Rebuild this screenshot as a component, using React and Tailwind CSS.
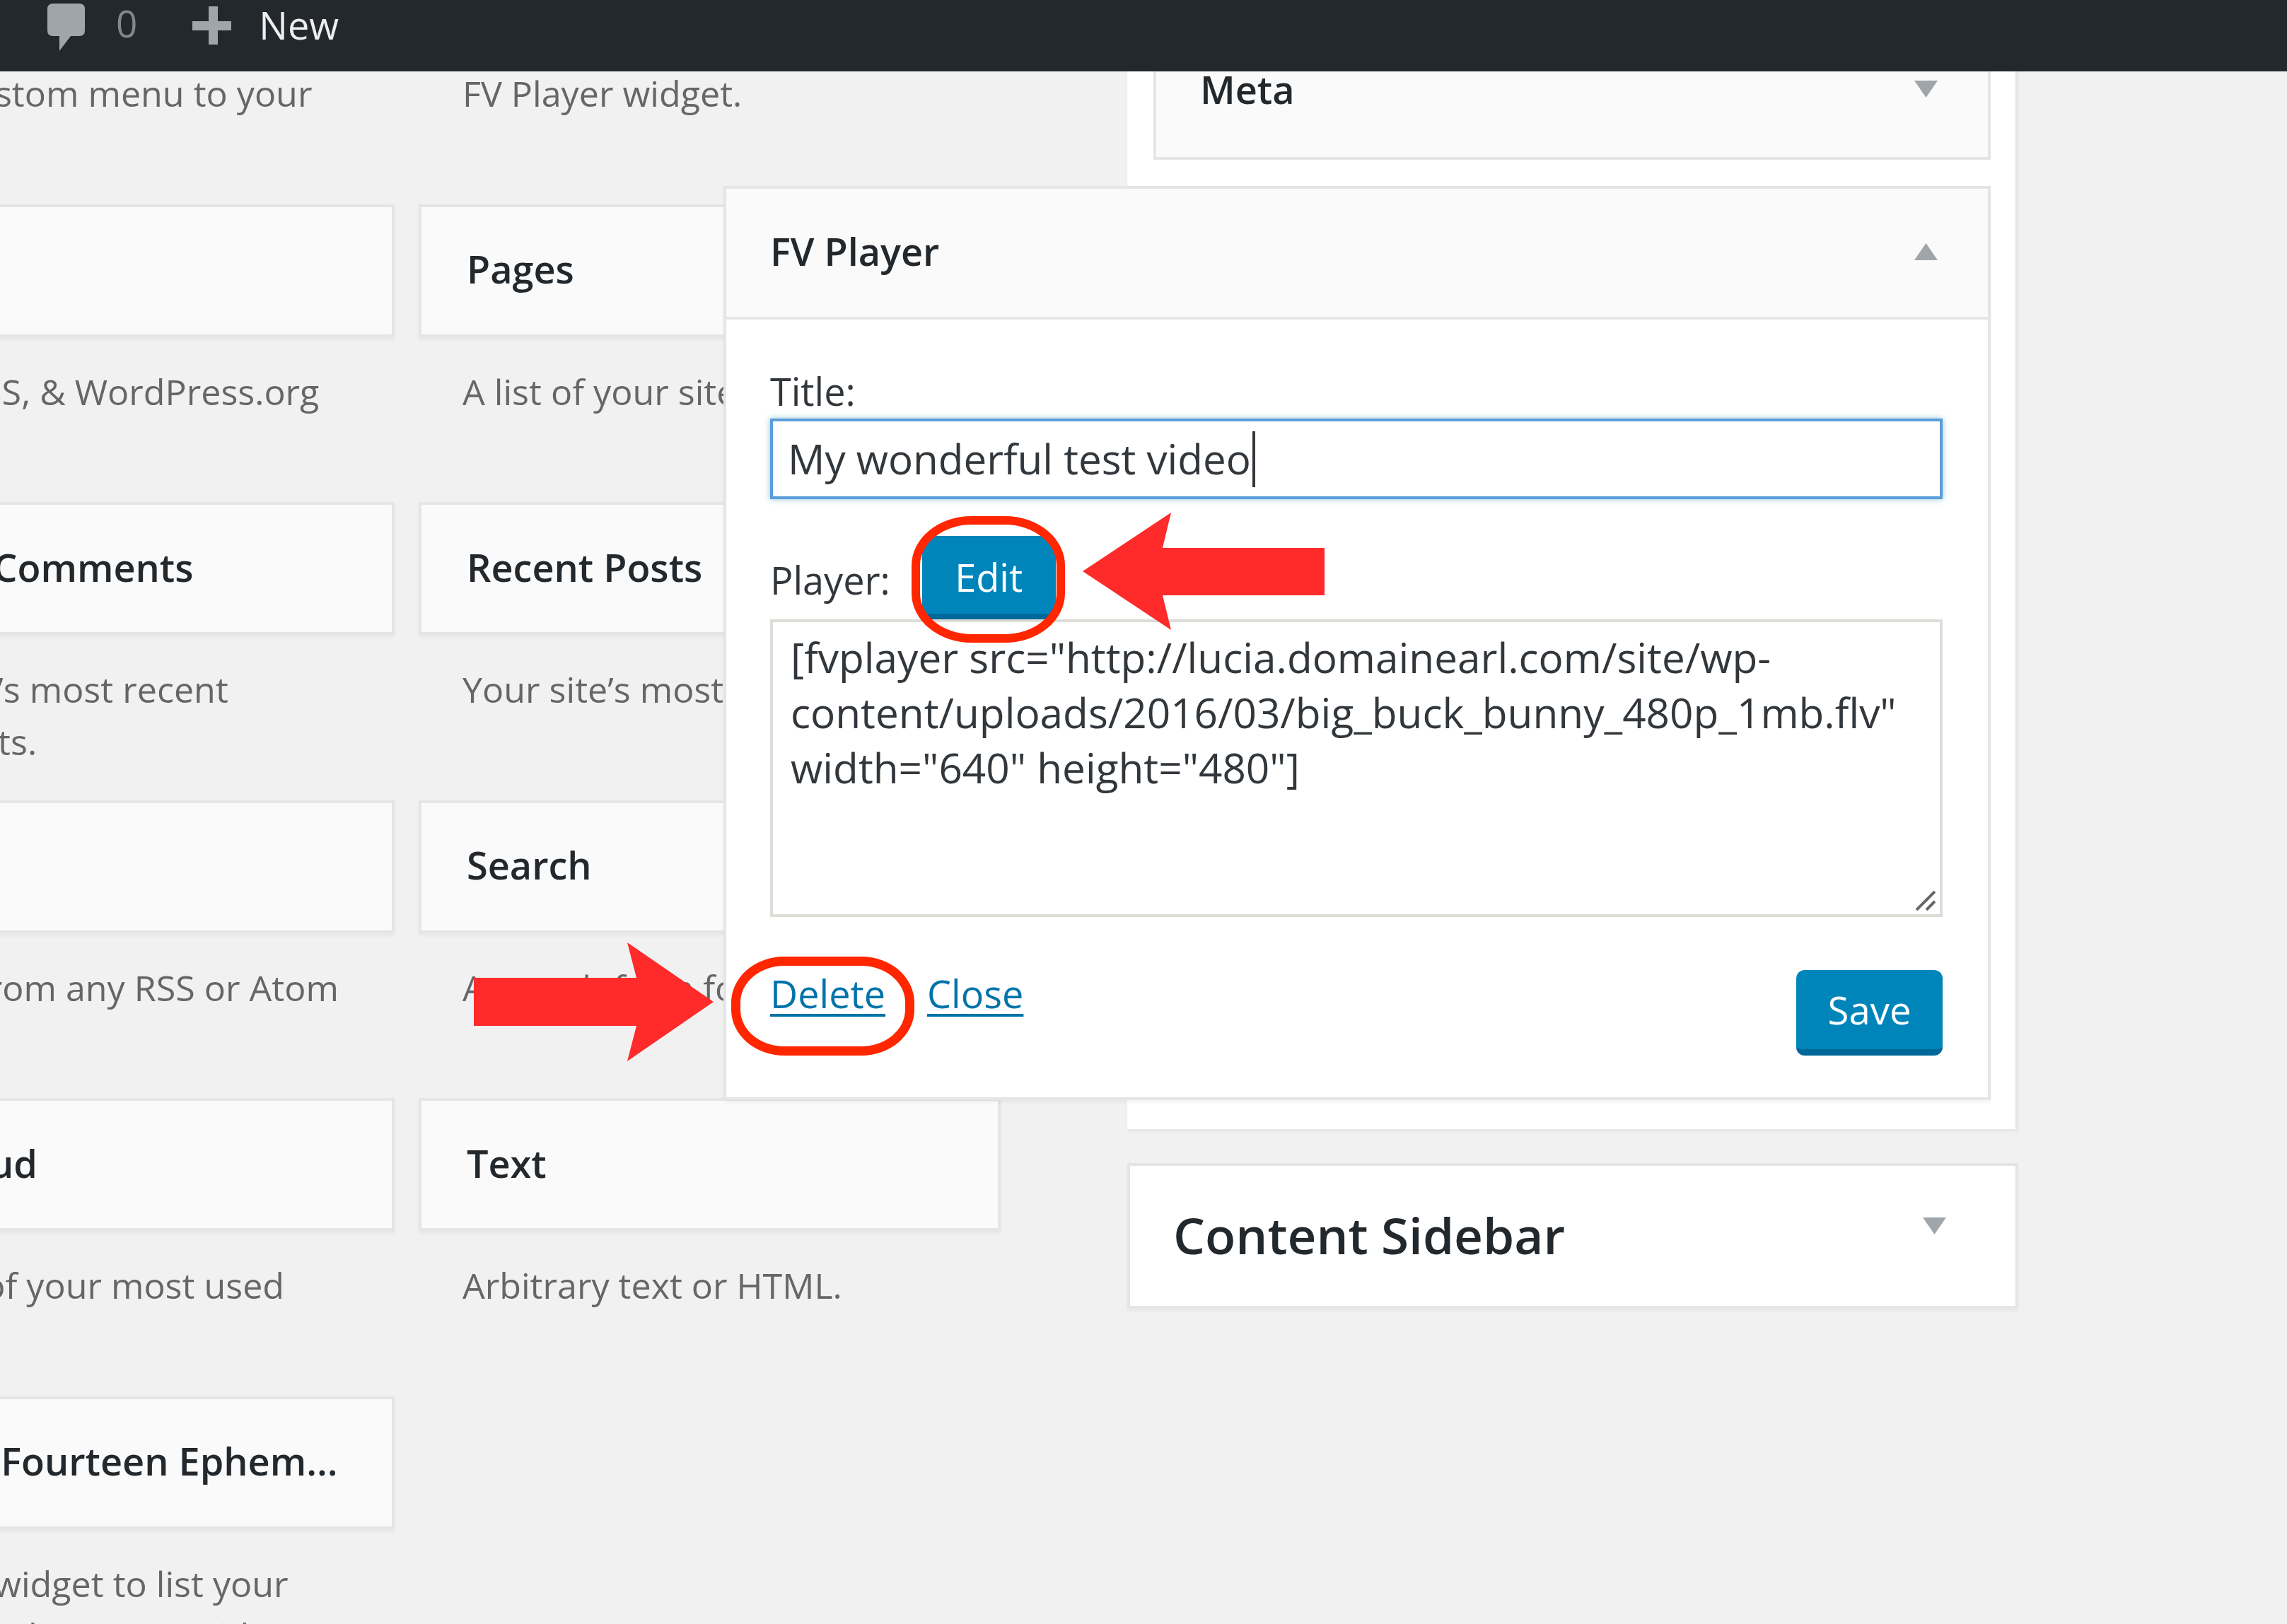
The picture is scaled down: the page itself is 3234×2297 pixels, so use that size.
import React from 'react';

const widgets = [
  ['', 'Add a custom menu to your sidebar.'],
  ['', 'FV Player widget.'],
  ['Meta', 'Login, RSS, & WordPress.org links.'],
  ['Pages', 'A list of your site’s Pages.'],
  ['Recent Comments', 'Your site’s most recent comments.'],
  ['Recent Posts', 'Your site’s most recent Posts.'],
  ['RSS', 'Entries from any RSS or Atom feed.'],
  ['Search', 'A search form for your site.'],
  ['Tag Cloud', 'A cloud of your most used tags.'],
  ['Text', 'Arbitrary text or HTML.'],
  ['Twenty Fourteen Ephem...', 'Use this widget to list your recent Aside, Quote, Video, Audio, Image, Gallery, and Link posts.'],
];

const Widget = ({ title, desc }) => (
  <div>
    <div className="h-[188px] flex items-center pl-[64px] pb-[4px] bg-[#fafafa] border-4 border-[#e5e5e5] shadow-[0_4px_4px_rgba(0,0,0,0.04)] text-[54px] font-semibold text-[#23282d] whitespace-nowrap">
      {title}
    </div>
    <p className="mt-[40px] px-[62px] text-[50.2px] leading-[74px] text-[#666]">{desc}</p>
  </div>
);

const Triangle = ({ up, className }) => (
  <svg viewBox="0 0 33 24" className={className}>
    <polygon points={up ? '16.5,0 33,24 0,24' : '0,0 33,0 16.5,24'} fill="#a0a5aa" />
  </svg>
);

export default function App() {
  return (
    <div className="relative w-[3234px] h-[2297px] overflow-hidden bg-[#f1f1f1] font-['Open_Sans',sans-serif]">
      {/* Admin bar */}
      <div className="relative z-30 h-[101px] bg-[#23282d] flex items-start">
        <svg viewBox="0 0 53 67" className="ml-[67px] mt-[5px] w-[53px] h-[67px]">
          <path d="M8 0H45Q53 0 53 8V38Q53 46 45 46H33L17 67V46H8Q0 46 0 38V8Q0 0 8 0Z" fill="#a0a5aa" />
        </svg>
        <span className="ml-[44px] mt-[-3px] text-[53px] leading-[72px] text-[#82878c]">0</span>
        <svg viewBox="0 0 55 54" className="ml-[78px] mt-[9px] w-[55px] h-[54px]">
          <path d="M23 0H36V21H55V34H36V54H23V34H0V21H23Z" fill="#a0a5aa" />
        </svg>
        <span className="ml-[39px] mt-[-1px] text-[54px] leading-[72px] text-[#eee]">New</span>
      </div>

      <div className="flex mt-[-234px] ml-[-271px]">
        {/* Available widgets */}
        <div className="w-[1686px] grid grid-cols-[829px_823px] gap-x-[34px] auto-rows-[421.5px] shrink-0">
          {widgets.map(([title, desc], i) => (
            <Widget key={i} title={title} desc={desc} />
          ))}
        </div>

        {/* Sidebars */}
        <div className="ml-[179px] w-[1260px] shrink-0">
          <div className="bg-white border-r-4 border-[#e5e5e5] pl-[37px] pr-[35px] pb-[41px] shadow-[0_4px_4px_rgba(0,0,0,0.04)]">
            <div className="h-[359px] bg-[#fafafa] border-x-4 border-b-4 border-[#e5e5e5] flex items-end">
              <div className="w-full h-[188px] flex items-center justify-between pl-[62px] pr-[71px] pb-[4px]">
                <span className="text-[54px] font-semibold text-[#23282d]">Meta</span>
                <Triangle className="w-[33px] h-[24px]" />
              </div>
            </div>

            {/* Open widget, wider than its sidebar */}
            <div className="relative z-20 mt-[37px] ml-[-608px] bg-white border-4 border-[#e5e5e5] shadow-[0_4px_4px_rgba(0,0,0,0.04)]">
              <div className="h-[185px] bg-[#fafafa] border-b-4 border-[#e5e5e5] flex items-center justify-between pl-[62px] pr-[71px] pb-[4px]">
                <span className="text-[54px] font-semibold text-[#23282d]">FV Player</span>
                <Triangle up className="w-[33px] h-[24px]" />
              </div>
              <div className="pl-[62px] pr-[64px] pt-[64px] pb-[59px] text-[54px] leading-[74px] text-[#32373c]">
                <div className="h-[76px]">Title:</div>
                <div className="h-[114px] border-4 border-[#5b9dd9] shadow-[0_0_8px_rgba(30,140,190,0.5)] pl-[21px] flex items-center text-[58.3px] text-[#32373c]">
                  My wonderful test video
                  <span className="ml-[2px] w-[4px] h-[79px] bg-[#32373c]" />
                </div>
                <div className="mt-[52px] h-[118px] flex items-center">
                  <span className="pt-[6px]">Player:</span>
                  <button className="ml-[45px] w-[189px] h-[118px] pt-[6px] rounded-[12px] bg-[#0085ba] border-b-[8px] border-[#006799] text-white text-[54px]">
                    Edit
                  </button>
                </div>
                <div className="relative h-[421px] border-4 border-[#ddddd8] pl-[25px] pr-[20px] pt-[10px] text-[58.5px] leading-[78px]">
                  [fvplayer src="http://lucia.domainearl.com/site/wp-content/uploads/2016/03/big_buck_bunny_480p_1mb.flv" width="640" height="480"]
                  <svg viewBox="0 0 28 28" className="absolute right-[6px] bottom-[5px] w-[28px] h-[28px]">
                    <path d="M1 27L27 1M15 27L27 15" stroke="#666" strokeWidth="4" fill="none" />
                  </svg>
                </div>
                <div className="mt-[75px] h-[121px] flex items-start justify-between">
                  <div className="flex gap-[59px] mt-[-4px] text-[#0073aa] underline decoration-[4px] underline-offset-[8px]">
                    <a>Delete</a>
                    <a>Close</a>
                  </div>
                  <button className="w-[207px] h-[121px] rounded-[12px] bg-[#0085ba] border-b-[9px] border-[#006799] text-white text-[54.5px]">
                    Save
                  </button>
                </div>
              </div>
            </div>
          </div>

          <div className="mt-[48px] h-[206px] bg-white border-4 border-[#e5e5e5] shadow-[0_4px_4px_rgba(0,0,0,0.04)] flex justify-between pl-[61px] pr-[98px]">
            <span className="text-[71px] leading-[196px] font-semibold text-[#23282d]">Content Sidebar</span>
            <Triangle className="mt-[73px] w-[33px] h-[24px]" />
          </div>
        </div>
      </div>

      {/* Annotations */}
      <div className="absolute z-40 left-[1289px] top-[730px] w-[217px] h-[179px] border-[12px] border-[#ff2600] rounded-[85px/70px]" />
      <div className="absolute z-40 left-[1034px] top-[1353px] w-[259px] h-[140px] border-[13px] border-[#ff2600] rounded-[75px/65px]" />
      <svg viewBox="0 0 3234 2297" className="absolute z-40 left-0 top-0 w-[3234px] h-[2297px] pointer-events-none">
        <polygon points="1531,808 1656,725 1644,775 1873,775 1873,842 1644,842 1656,891" fill="#ff2a2a" />
        <polygon points="670,1383 900,1383 887,1333 1009,1417 887,1501 900,1451 670,1451" fill="#ff2a2a" />
      </svg>
    </div>
  );
}
